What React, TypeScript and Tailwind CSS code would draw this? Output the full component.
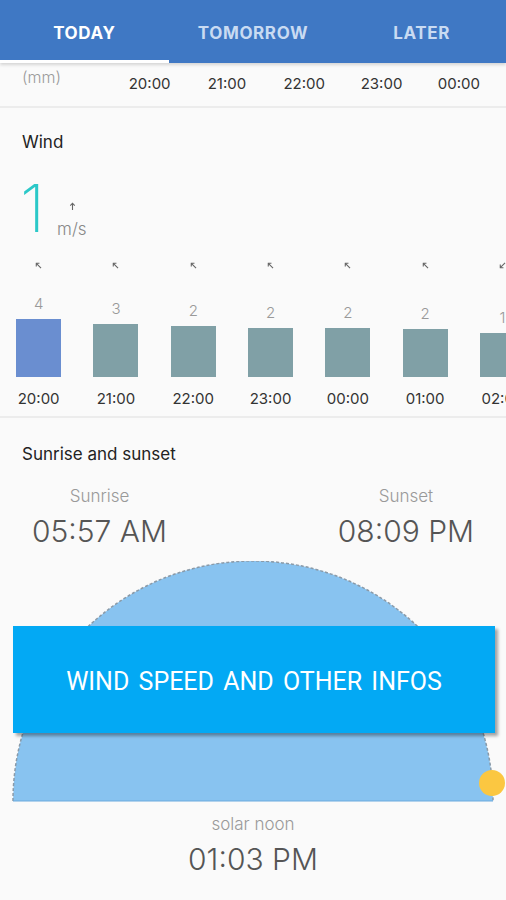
import React from "react";

const hours = ["20:00", "21:00", "22:00", "23:00", "00:00", "01:00", "02:00"];
const bars = [
  { v: "4", h: 58, dir: "nw", active: true },
  { v: "3", h: 53, dir: "nw" },
  { v: "2", h: 51, dir: "nw" },
  { v: "2", h: 49, dir: "nw" },
  { v: "2", h: 49, dir: "nw" },
  { v: "2", h: 48, dir: "nw" },
  { v: "1", h: 44, dir: "sw" },
];

function Arrow({ dir }: { dir: string }) {
  const rot = dir === "nw" ? -45 : dir === "n" ? 0 : 225;
  return (
    <svg width="9" height="9" viewBox="0 0 10 10" style={{ transform: `rotate(${rot}deg)` }}>
      <path d="M5 9V1.5M2.5 4L5 1.5L7.5 4" stroke="#666" strokeWidth="1.2" fill="none" />
    </svg>
  );
}

export default function App() {
  const font = { fontFamily: "Inter, 'Open Sans', sans-serif" };
  return (
    <div className="w-[506px] h-[900px] overflow-hidden bg-[#fafafa] relative" style={font}>
      {/* Tabs */}
      <div className="h-[63px] bg-[#3f78c4] flex relative shadow-[0_2px_3px_rgba(0,0,0,0.15)] z-10">
        <div className="flex-1 flex flex-col">
          <div className="flex-1 flex items-center justify-center text-white font-bold text-[17px] tracking-[0.6px] pt-[8px]">TODAY</div>
          <div className="h-[3px] bg-white"></div>
        </div>
        <div className="flex-1 flex items-center justify-center text-[#c9dbf2] font-bold text-[17px] tracking-[0.6px] pt-[5px]">TOMORROW</div>
        <div className="flex-1 flex items-center justify-center text-[#c9dbf2] font-bold text-[17px] tracking-[0.6px] pt-[5px]">LATER</div>
      </div>

      {/* precipitation row tail */}
      <div className="h-[45px] flex border-b-2 border-[#ececec] relative">
        <div className="absolute left-[22px] top-[2px] text-[#9a9a9a] text-[16px] font-light">(mm)</div>
        <div className="flex pl-[111px] pt-[10px]">
          {["20:00", "21:00", "22:00", "23:00", "00:00"].map((t) => (
            <div key={t} className="w-[77.3px] text-center text-[15px] text-[#333]">{t}</div>
          ))}
        </div>
      </div>

      {/* Wind */}
      <div className="border-b-2 border-[#ececec] h-[310px]">
        <div className="pl-[22px] pt-[22px] text-[17px] text-[#222]">Wind</div>
        <div className="flex items-end pl-[20px] mt-[22px] h-[60px]">
          <div className="text-[#2bc8c8] text-[66px] leading-[60px] font-extralight">1</div>
          <div className="flex flex-col items-center ml-[12px]">
            <div className="mb-[10px] ml-[2px] flex">
              <Arrow dir="n" />
            </div>
            <div className="text-[#888] text-[17px] leading-none font-light">m/s</div>
          </div>
        </div>
        <div className="flex mt-[20px]">
          {bars.map((b, i) => (
            <div key={i} className="w-[77.3px] shrink-0 flex flex-col items-center">
              <div className="h-[16px] flex items-center">
                <Arrow dir={b.dir} />
              </div>
              <div className="h-[103px] flex flex-col justify-end items-center">
                <div className="text-[#999] text-[15px] font-light leading-none mb-[8px]">{b.v}</div>
                <div
                  className={b.active ? "w-[45px] bg-[#6a8ed0]" : "w-[45px] bg-[#80a0a6]"}
                  style={{ height: b.h }}
                ></div>
              </div>
              <div className="text-[15px] text-[#333] mt-[11px]">{hours[i]}</div>
            </div>
          ))}
        </div>
      </div>

      {/* Sunrise and sunset */}
      <div>
        <div className="pl-[22px] pt-[24px] text-[17px] text-[#222]">Sunrise and sunset</div>
        <div className="flex justify-between px-[32px] mt-[20px]">
          <div className="flex flex-col items-center">
            <div className="text-[#999] text-[17px] font-light leading-none">Sunrise</div>
            <div className="text-[#555] text-[30px] font-light leading-none mt-[11px]">05:57 AM</div>
          </div>
          <div className="flex flex-col items-center">
            <div className="text-[#999] text-[17px] font-light leading-none">Sunset</div>
            <div className="text-[#555] text-[30px] font-light leading-none mt-[11px]">08:09 PM</div>
          </div>
        </div>
        <div className="relative mt-[15px] h-[242px]">
          <svg width="506" height="242" viewBox="0 0 506 242" className="absolute left-0 top-0">
            <path d="M13 240 A240 240 0 0 1 493 240 Z" fill="#88c3f0" />
            <path
              d="M13 240 A240 240 0 0 1 493 240"
              fill="none"
              stroke="#8a9aa8"
              strokeWidth="1.5"
              strokeDasharray="3 2"
            />
            <line x1="13" y1="240" x2="493" y2="240" stroke="#6aa9dd" strokeWidth="1" />
            <circle cx="492" cy="222" r="13" fill="#fbc741" />
          </svg>
          <div className="absolute left-[13px] top-[65px] w-[482px] h-[107px] bg-[#03a9f4] shadow-[3px_3px_3px_rgba(0,0,0,0.35)] flex items-center justify-center">
            <span className="text-white text-[25px] [word-spacing:3px] pt-[5px]" style={{ fontFamily: "Roboto, 'Open Sans', sans-serif" }}>
              WIND SPEED AND OTHER INFOS
            </span>
          </div>
        </div>
        <div className="flex flex-col items-center mt-[13px]">
          <div className="text-[#999] text-[17px] font-light leading-none">solar noon</div>
          <div className="text-[#555] text-[30px] font-light leading-none mt-[11px]">01:03 PM</div>
        </div>
      </div>
    </div>
  );
}
